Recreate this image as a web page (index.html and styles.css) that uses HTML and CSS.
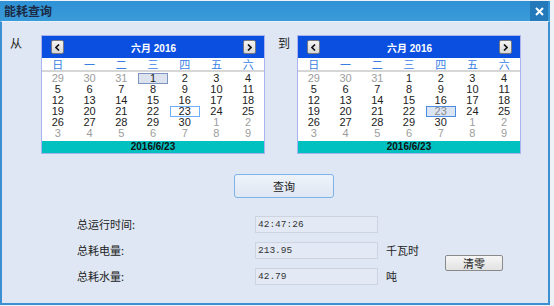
FILE: index.html
```html
<!DOCTYPE html>
<html lang="zh-CN">
<head>
  <meta charset="UTF-8" />
  <title>能耗查询</title>
  <link rel="stylesheet" href="styles.css">
</head>
<body>
  <div class="window">
    <div class="titlebar">
      <span class="title">能耗查询</span>
      <span class="close">
        <svg width="9" height="9" viewBox="0 0 9 9"><path d="M1 1 L8 8 M8 1 L1 8" stroke="#fff" stroke-width="2"/></svg>
      </span>
    </div>

    <div class="content">
      <div class="range">
        <span class="range-label from">从</span>
        <div class="calendar" id="cal-from" data-hot="1" data-sel="23" data-mark="from"></div>
        <span class="range-label to">到</span>
        <div class="calendar" id="cal-to" data-sel="23" data-mark="to"></div>
      </div>

      <button class="query-btn">查询</button>

      <div class="stats">
        <div class="stats-grid">
          <div class="stat-label">总运行时间:</div>
          <div class="stat-field">42:47:26</div>
          <div class="stat-unit"></div>

          <div class="stat-label">总耗电量:</div>
          <div class="stat-field">213.95</div>
          <div class="stat-unit">千瓦时</div>

          <div class="stat-label">总耗水量:</div>
          <div class="stat-field">42.79</div>
          <div class="stat-unit">吨</div>
        </div>
        <button class="clear-btn">清零</button>
      </div>
    </div>
  </div>

  <script>
    const weekNames = ['日', '一', '二', '三', '四', '五', '六'];

    function buildCalendar(el) {
      const mark = el.dataset.mark;
      let html = '';
      html += '<div class="cal-head">';
      html += '<span class="cal-nav"><svg width="5" height="7" viewBox="0 0 5 7"><path d="M4 0.5 L1 3.5 L4 6.5" fill="none" stroke="#111" stroke-width="1.6"/></svg></span>';
      html += '<span class="cal-title">六月 2016</span>';
      html += '<span class="cal-nav"><svg width="5" height="7" viewBox="0 0 5 7"><path d="M1 0.5 L4 3.5 L1 6.5" fill="none" stroke="#111" stroke-width="1.6"/></svg></span>';
      html += '</div>';

      html += '<div class="cal-week">';
      weekNames.forEach(w => { html += `<span>${w}</span>`; });
      html += '</div>';

      const days = [];
      [29, 30, 31].forEach(d => days.push({ d, other: true }));
      for (let d = 1; d <= 30; d++) days.push({ d, other: false });
      for (let d = 1; days.length < 42; d++) days.push({ d, other: true });

      html += '<div class="cal-days">';
      days.forEach(item => {
        let cls = 'day';
        if (item.other) cls += ' other';
        if (!item.other && mark === 'from' && item.d === 1) cls += ' hot';
        if (!item.other && mark === 'from' && item.d === 23) cls += ' today';
        if (!item.other && mark === 'to' && item.d === 23) cls += ' picked';
        html += `<span class="${cls}">${item.d}</span>`;
      });
      html += '</div>';

      html += '<div class="cal-foot">2016/6/23</div>';
      el.innerHTML = html;
    }

    document.querySelectorAll('.calendar').forEach(buildCalendar);
  </script>
</body>
</html>
```

FILE: styles.css
```css
body {
  margin: 0;
  background: #eef1f5;
  font-family: "Noto Sans CJK SC", "Liberation Sans", sans-serif;
  color: #222;
}

.window {
  width: 550px;
  margin-top: 1px;
}

.titlebar {
  height: 20px;
  background: linear-gradient(#2f92d6, #3a9bd9);
  display: flex;
  align-items: center;
  justify-content: space-between;
}

.title {
  font-size: 12px;
  line-height: 20px;
  padding-left: 4px;
  color: #1b2b45;
  font-weight: bold;
}

.close {
  width: 18px;
  height: 20px;
  margin-right: 2px;
  background: #2479ba;
  display: flex;
  align-items: center;
  justify-content: center;
}

.content {
  height: 284px;
  box-sizing: border-box;
  border: 2px solid #3b90d2;
  border-top: 1px solid #eaf0f8;
  background: #dfe7f4;
}

/* date range */

.range {
  display: flex;
  align-items: flex-start;
  padding-top: 13px;
}

.range-label {
  width: 12px;
  font-size: 12px;
  line-height: 16px;
  color: #222;
}

.from {
  margin-left: 8px;
  margin-right: 19px;
}

.to {
  margin-left: 13px;
  margin-right: 7px;
}

.calendar {
  width: 224px;
  box-sizing: border-box;
  border: 1px solid #aab3ef;
  background: #fff;
}

.cal-head {
  height: 22px;
  background: #0b4fe1;
  display: flex;
  align-items: center;
  justify-content: space-between;
  padding: 0 8px 0 9px;
}

.cal-nav {
  width: 11px;
  height: 12px;
  border: 1px solid #7a7a7a;
  border-radius: 2px;
  background: linear-gradient(#f4f4f4, #d8d8d8);
  display: flex;
  align-items: center;
  justify-content: center;
}

.cal-title {
  color: #fff;
  font-family: "Liberation Sans", "Noto Sans CJK SC", sans-serif;
  font-weight: bold;
  font-size: 10px;
}

.cal-week {
  display: grid;
  grid-template-columns: repeat(7, 1fr);
  height: 12px;
  font-size: 11px;
  line-height: 12px;
  color: #3a7fe3;
  text-align: center;
  border-bottom: 2px solid #d6d6d6;
}

.cal-days {
  display: grid;
  grid-template-columns: repeat(7, 1fr);
  grid-auto-rows: 11px;
  padding: 1px 0 2px;
}

.day {
  font-family: "Liberation Sans", sans-serif;
  font-size: 11px;
  line-height: 11px;
  text-align: center;
  color: #222;
  box-sizing: border-box;
  margin: 0 1px;
}

.day.other {
  color: #9c9c9c;
}

.day.hot {
  background: #dde3ee;
  border: 1px solid #7e95c2;
  line-height: 9px;
}

.day.today {
  border: 1px solid #6db0ff;
  line-height: 9px;
}

.day.picked {
  background: #dbe4f2;
  border: 1px solid #4d8de0;
  line-height: 9px;
  color: #8a8a8a;
}

.cal-foot {
  height: 12px;
  background: #00c0c0;
  font-family: "Liberation Sans", sans-serif;
  font-weight: bold;
  font-size: 10px;
  line-height: 12px;
  text-align: center;
  color: #111;
}

/* query */

.query-btn {
  display: block;
  width: 100px;
  height: 24px;
  margin: 20px 0 0 232px;
  border: 1px solid #7db3e8;
  border-radius: 3px;
  background: linear-gradient(#eef3fa, #dfe7f3);
  font-family: "Noto Sans CJK SC", sans-serif;
  font-size: 11px;
  color: #222;
  padding: 0;
}

/* stats */

.stats {
  display: flex;
  align-items: flex-start;
  margin-top: 18px;
  padding-left: 75px;
}

.stats-grid {
  display: grid;
  grid-template-columns: 170px 123px 50px;
  grid-auto-rows: 17px;
  column-gap: 8px;
  row-gap: 9px;
}

.stat-label,
.stat-unit {
  font-size: 11px;
  line-height: 17px;
  color: #222;
}

.stat-field {
  box-sizing: border-box;
  border: 1px solid #cdd4df;
  background: #e3eaf5;
  font-family: "Liberation Mono", monospace;
  font-size: 9.5px;
  line-height: 15px;
  padding-left: 2px;
  color: #333;
}

.clear-btn {
  width: 58px;
  height: 16px;
  margin: 39px 0 0 9px;
  padding: 0;
  border: 1px solid #8a8a8a;
  border-radius: 2px;
  background: linear-gradient(#f6f6f6, #e2e2e2);
  font-family: "Noto Sans CJK SC", sans-serif;
  font-size: 11px;
  line-height: 14px;
  color: #222;
}
```
